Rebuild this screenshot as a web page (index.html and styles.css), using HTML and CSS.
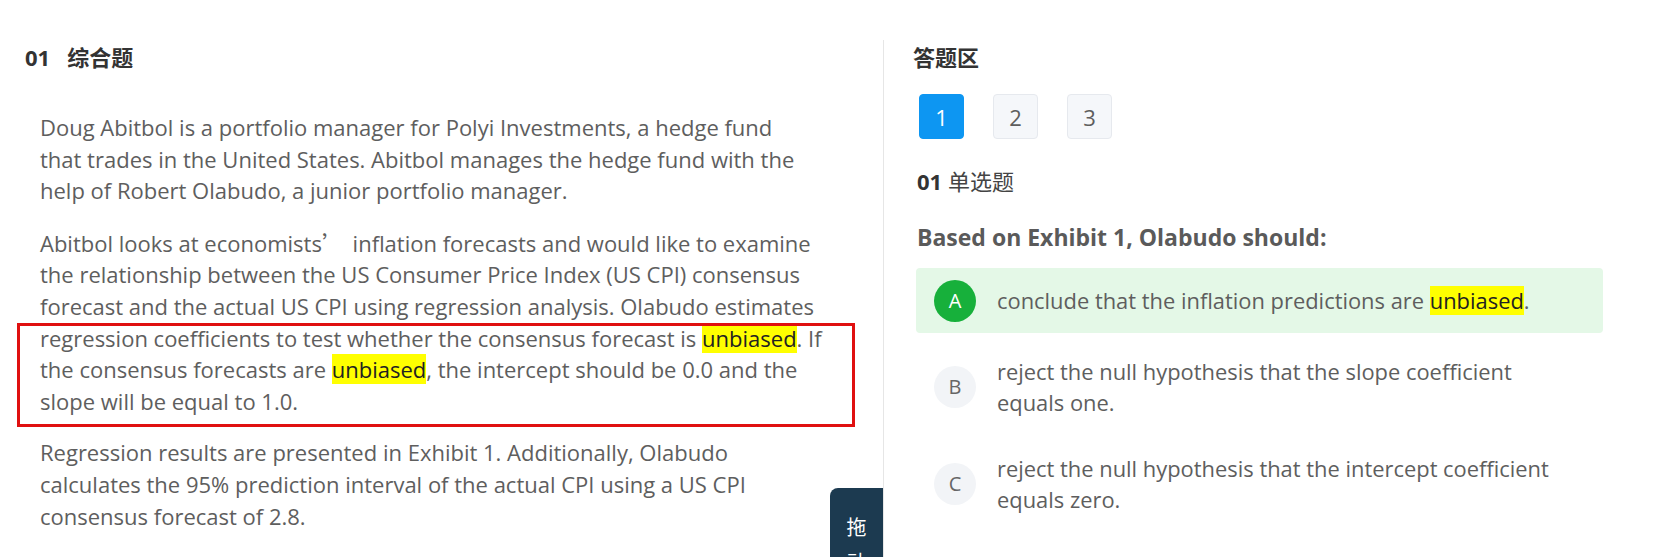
FILE: index.html
```html
<!DOCTYPE html>
<html lang="zh-CN">
<head>
<meta charset="utf-8">
<title>综合题</title>
<link rel="stylesheet" href="styles.css">
</head>
<body>
<div class="page">
  <section class="left">
    <h2 class="q-title"><span class="q-num">01</span><span class="q-type">综合题</span></h2>
    <div class="stem">
      <p class="intro">Doug Abitbol is a portfolio manager for Polyi Investments, a hedge fund that trades in the United States. Abitbol manages the hedge fund with the help of Robert Olabudo, a junior portfolio manager.</p>
      <p>Abitbol looks at economists<span class="cjk-quote">’</span> inflation forecasts and would like to examine the relationship between the US Consumer Price Index (US CPI) consensus forecast and the actual US CPI using regression analysis. Olabudo estimates regression coefficients to test whether the consensus forecast is <mark>unbiased</mark>. If the consensus forecasts are <mark>unbiased</mark>, the intercept should be 0.0 and the slope will be equal to 1.0.</p>
      <p>Regression results are presented in Exhibit 1. Additionally, Olabudo calculates the 95% prediction interval of the actual CPI using a US CPI consensus forecast of 2.8.</p>
    </div>
    <div class="annot"></div>
    <div class="drag-tab">拖<br>动</div>
  </section>
  <section class="right">
    <h2 class="area-title">答题区</h2>
    <div class="nums">
      <span class="num active">1</span>
      <span class="num">2</span>
      <span class="num">3</span>
    </div>
    <div class="sub-title"><b>01</b> 单选题</div>
    <div class="question">Based on Exhibit 1, Olabudo should:</div>
    <div class="options">
      <div class="option selected"><span class="letter">A</span><span class="opt-text">conclude that the inflation predictions are <mark>unbiased</mark>.</span></div>
      <div class="option"><span class="letter">B</span><span class="opt-text">reject the null hypothesis that the slope coefficient<br>equals one.</span></div>
      <div class="option"><span class="letter">C</span><span class="opt-text">reject the null hypothesis that the intercept coefficient equals zero.</span></div>
    </div>
  </section>
</div>
</body>
</html>
```
FILE: styles.css
```css
* { box-sizing: border-box; }
html, body { margin: 0; padding: 0; background: #fff; }
body {
  font-family: "Open Sans", "Noto Sans CJK SC", sans-serif;
  color: #5e5e5e;
  overflow: hidden;
}
.page {
  display: flex;
  height: 557px;
  padding-top: 40px;
  overflow: hidden;
}
.left {
  position: relative;
  width: 884px;
  flex: none;
  border-right: 1px solid #e6e6e6;
  padding: 0 56px 0 25px;
}
.q-title, .area-title {
  margin: 0;
  font-size: 22px;
  line-height: 34px;
  font-weight: 700;
  color: #333;
}
.q-num { margin-right: 17px; }
.stem { padding: 38px 0 0 15px; }
.stem p {
  margin: 0 0 20px;
  font-size: 22px;
  line-height: 31.6px;
}
.stem p.intro { max-width: 775px; }
.cjk-quote {
  font-family: "Noto Sans CJK SC", sans-serif;
  margin-right: 3px;
}
mark {
  background: #ffff00;
  color: #222;
}
.annot {
  position: absolute;
  left: 17px;
  top: 283px;
  width: 838px;
  height: 104px;
  border: 3px solid #e01010;
  pointer-events: none;
}
.drag-tab {
  position: absolute;
  left: 830px;
  top: 448px;
  width: 53px;
  height: 120px;
  background: #1c3a50;
  border-radius: 8px 0 0 0;
  color: #fff;
  font-family: "Noto Sans CJK SC", sans-serif;
  font-size: 20px;
  line-height: 35px;
  text-align: center;
  padding-top: 21px;
}
.right {
  flex: 1;
  padding: 0 52px 0 29px;
}
.nums {
  display: flex;
  gap: 29px;
  margin: 20px 0 0 6px;
}
.num {
  width: 45px;
  height: 45px;
  border-radius: 4px;
  border: 1px solid #e6e9ee;
  background: #f5f7fa;
  color: #5e5e5e;
  font-size: 22px;
  display: flex;
  align-items: center;
  justify-content: center;
}
.num.active {
  background: #0d96f2;
  border-color: #0d96f2;
  color: #fff;
}
.sub-title {
  margin: 25px 0 0 4px;
  font-size: 22px;
  line-height: 34px;
  color: #444;
}
.sub-title b { color: #333; }
.question {
  margin: 22px 0 0 4px;
  font-size: 23px;
  line-height: 34px;
  font-weight: 700;
  color: #5a5a5a;
}
.options {
  margin: 14px 0 0 3px;
  display: flex;
  flex-direction: column;
  gap: 11px;
}
.option {
  display: flex;
  align-items: center;
  padding: 11.5px 18px;
  border-radius: 4px;
  font-size: 21.9px;
  line-height: 31.6px;
}
.option.selected { background: #e4f8e7; }
.letter {
  flex: none;
  width: 42px;
  height: 42px;
  border-radius: 50%;
  background: #f2f4f7;
  color: #666;
  display: flex;
  align-items: center;
  justify-content: center;
  font-size: 20px;
  margin-right: 21px;
}
.selected .letter {
  background: #17b03b;
  color: #fff;
}
```
